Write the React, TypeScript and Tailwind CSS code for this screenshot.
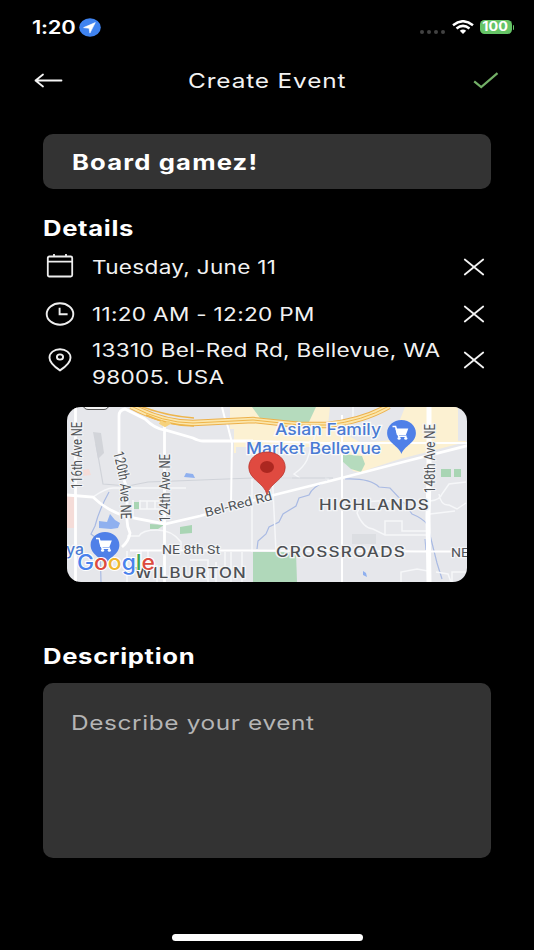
import type { ReactNode } from 'react'
import clsx from 'clsx'

export default function App() {
    return (
        <div className="flex h-[950px] w-[534px] flex-col overflow-hidden bg-black font-['Inter',sans-serif] text-[#f2f2f2]">
            <StatusBar />
            <Header />
            <main className="flex flex-col px-[43px] pt-[27px]">
                <div className="flex h-[55px] items-center rounded-[10px] bg-[#333333] pt-[2px] pl-[29px]">
                    <WideText className="text-[21px] font-bold tracking-[0.95px] text-white">
                        Board gamez!
                    </WideText>
                </div>

                <SectionTitle className="mt-[26px]">Details</SectionTitle>
                <div className="mt-[3px] flex flex-col">
                    <DetailRow className="h-[46px]" icon={<CalendarIcon />}>
                        <WideText className="pt-[2px] text-[18.5px] tracking-[0.25px]">
                            Tuesday, June 11
                        </WideText>
                    </DetailRow>
                    <DetailRow className="h-[47px]" icon={<ClockIcon />}>
                        <WideText className="pt-[2px] text-[18.5px] tracking-[0.25px]">
                            11:20 AM - 12:20 PM
                        </WideText>
                    </DetailRow>
                    <DetailRow className="h-[46px]" icon={<PinIcon />}>
                        <WideText className="pt-[8px] text-[18.5px] leading-[27px] tracking-[0.25px]">
                            13310 Bel-Red Rd, Bellevue, WA
                            <br />
                            98005. USA
                        </WideText>
                    </DetailRow>
                </div>

                <div className="mt-6 ml-[24px] h-[175px] w-[399.5px] overflow-hidden rounded-[14px]">
                    <EventMap />
                </div>

                <SectionTitle className="mt-[61px]">Description</SectionTitle>
                <div className="mt-[14px] h-[175px] rounded-[10px] bg-[#333333] pt-[27px] pl-[28px]">
                    <WideText className="text-[20px] leading-[27px] tracking-[0.5px] text-[#b5b5b5]">
                        Describe your event
                    </WideText>
                </div>
            </main>
            <div className="mx-auto mt-auto mb-[9px] h-[7px] w-[191px] rounded-full bg-white" />
        </div>
    )
}

function WideText({
    children,
    className,
}: {
    children: ReactNode
    className?: string
}) {
    return (
        <div
            className={clsx(
                'w-max origin-left scale-x-[1.22] whitespace-nowrap',
                className
            )}
        >
            {children}
        </div>
    )
}

function SectionTitle({
    children,
    className,
}: {
    children: ReactNode
    className?: string
}) {
    return (
        <h2 className={clsx('flex h-[26px] items-center pt-[2px]', className)}>
            <WideText className="text-[21px] font-bold tracking-[0.55px] text-white">
                {children}
            </WideText>
        </h2>
    )
}

function DetailRow({
    icon,
    children,
    className,
}: {
    icon: ReactNode
    children: ReactNode
    className?: string
}) {
    return (
        <div className={clsx('flex items-center', className)}>
            <div className="flex w-[34px] justify-center">{icon}</div>
            <div className="ml-[14.5px] flex-1">{children}</div>
            <CloseIcon />
        </div>
    )
}

function StatusBar() {
    return (
        <div className="flex h-[54px] shrink-0 items-center pr-[20px] pl-[32px]">
            <div className="w-[47px] shrink-0">
                <WideText className="text-[18px] font-semibold tracking-[-0.2px] text-white">
                    1:20
                </WideText>
            </div>
            <svg width="22" height="19" viewBox="0 0 22 19">
                <ellipse cx="11" cy="9.5" rx="10.8" ry="9.2" fill="#3f83f0" />
                <path d="M16.3 4.6 4.6 9.6l5.5.7.8 4.8z" fill="#fff" stroke="#fff" strokeWidth=".6" />
            </svg>
            <div className="mt-[9px] ml-auto flex gap-[2.7px]">
                <i className="size-1 rounded-full bg-[#424242]" />
                <i className="size-1 rounded-full bg-[#424242]" />
                <i className="size-1 rounded-full bg-[#424242]" />
                <i className="size-1 rounded-full bg-[#424242]" />
            </div>
            <svg
                className="ml-[7px]"
                width="22"
                height="15"
                viewBox="0 0 22 15"
                fill="none"
                stroke="#fff"
                strokeWidth="2.5"
            >
                <path d="M1 5.2Q11-2.7 21 5.2" />
                <path d="M4.5 8.4q6.5-5 13 0" />
                <path d="m11 14-3.2-3.2q3.2-2.6 6.4 0z" fill="#fff" stroke="none" />
            </svg>
            <div className="ml-[6px] flex h-[14.5px] w-[32px] items-center justify-center rounded-[4.5px] bg-[#65c466]">
                <span className="scale-x-[1.15] text-[12.5px] leading-none font-bold text-white">
                    100
                </span>
            </div>
            <div className="ml-px h-[5px] w-[1.5px] rounded-r-full bg-[#65c466]" />
        </div>
    )
}

function Header() {
    return (
        <div className="flex h-[53px] shrink-0 items-center pr-[35.5px] pl-[34px]">
            <svg
                width="29"
                height="15"
                viewBox="0 0 29 15"
                fill="none"
                stroke="#f5f5f5"
                strokeWidth="1.8"
                strokeLinecap="round"
                strokeLinejoin="round"
            >
                <path d="M9 1.5 1.5 7.5 9 13.5M1.5 7.5h26" />
            </svg>
            <div className="ml-[125px]">
                <WideText className="text-[20px] tracking-[0.7px]">
                    Create Event
                </WideText>
            </div>
            <svg
                className="ml-auto"
                width="26"
                height="17"
                viewBox="0 0 26 17"
                fill="none"
                stroke="#73b067"
                strokeWidth="2.2"
            >
                <path d="m1.2 9.3 7 5.7L24.5 1.2" />
            </svg>
        </div>
    )
}

function CalendarIcon() {
    return (
        <svg
            className="mb-[3px]"
            width="28"
            height="25"
            viewBox="0 0 28 25"
            fill="none"
            stroke="#eeeeee"
            strokeWidth="1.8"
        >
            <rect x="1.8" y="3.5" width="24.4" height="20" rx="1.5" />
            <path d="M1.8 8.6h24.4M8 1v3M20 1v3" />
        </svg>
    )
}

function ClockIcon() {
    return (
        <svg
            width="30"
            height="24"
            viewBox="0 0 30 24"
            fill="none"
            stroke="#eeeeee"
            strokeWidth="1.9"
        >
            <ellipse cx="15" cy="12" rx="13.3" ry="10.7" />
            <path d="M14.6 5.7v6.5h8" />
        </svg>
    )
}

function PinIcon() {
    return (
        <svg
            width="24"
            height="24"
            viewBox="0 0 24 24"
            fill="none"
            stroke="#eeeeee"
            strokeWidth="1.9"
        >
            <path d="M12 22.4C6 18.4 1.5 14.6 1.5 9.7c0-5 4.6-8.4 10.5-8.4s10.5 3.4 10.5 8.4c0 4.9-4.5 8.7-10.5 12.7z" />
            <ellipse cx="12" cy="9" rx="3.1" ry="2.6" />
        </svg>
    )
}

function CloseIcon() {
    return (
        <svg
            className="mr-[6px]"
            width="22"
            height="18"
            viewBox="0 0 22 18"
            fill="none"
            stroke="#f2f2f2"
            strokeWidth="1.8"
            strokeLinecap="round"
        >
            <path d="m1.8 1.5 18.4 15M20.2 1.5 1.8 16.5" />
        </svg>
    )
}

function StorePin({ x, y }: { x: number; y: number }) {
    return (
        <g transform={`translate(${x} ${y})`}>
            <path
                d="M0 21C-2.5 13-14.4 10-14.4 0c0-7.2 6.4-13 14.4-13S14.4-7.2 14.4 0C14.4 10 2.5 13 0 21z"
                fill="#4f80e8"
            />
            <path d="M-6.2-4.5h13l-2.4 6.6h-9z" fill="#fff" />
            <path
                d="M-9-6.4h3.1l3 9.6h8"
                fill="none"
                stroke="#fff"
                strokeWidth="1.5"
            />
            <ellipse cx="-2.4" cy="5.4" rx="1.6" ry="1.3" fill="#fff" />
            <ellipse cx="4.3" cy="5.4" rx="1.6" ry="1.3" fill="#fff" />
        </g>
    )
}

function EventMap() {
    return (
        <svg
            width="400"
            height="175"
            viewBox="67 407 400 175"
            className="block"
            fontFamily="Inter, sans-serif"
        >
            <rect x="67" y="407" width="400" height="175" fill="#e6e7eb" />

            {/* land use */}
            <path d="M230 407h100l-2 18 60 32-25 16-10-2-12-16-24-8h-81v6h-2v-24h-4z" fill="#fcf1d2" />
            <path d="M405 407h53v34h8v1l-66 17-37 12-2-28 31-3z" fill="#fcf1d2" />
            <path d="M252 407h64l-8 17-48-6z" fill="#b5dbbd" />
            <path d="M342 454l20 2 3 8-4 8-10-3-9-8z" fill="#b5dbbd" />
            <path d="M253 552h43l1 30h-44z" fill="#b0d8ba" />
            <path d="M441 469h10v8h-10zM454 469h7v8h-7z" fill="#a9d5b4" />
            <path d="M134 502h5v7h-5zM180 527l12-2v8l-12 1zM150 524l14 1-6 4h-8z" fill="#a9d5b4" />
            <path d="M93 432l8 1 3 20-6 6z" fill="#d2d4d9" />
            <path d="M352 534h24v10h-24z" fill="#dcdee2" />
            <path d="M67 496h8v32h-8zM83 470l6-1 2 6-8 1z" fill="#f5dcd8" />
            <path d="M99 521l8 1 3-8 5 6 5 3-2 5-7 1-12-1z" fill="#8fb0ef" />
            <path d="M186 473l7 1 2 4-11-1zM363 571l3 2 1 4-4-2z" fill="#8fb0ef" />

            {/* streams */}
            <g fill="none" stroke="#a9bae3" strokeWidth="1.2">
                <path d="M327 481q-15 6-18 14l-10 3-3 8-13 8-4 8-10 5-3 7-8 7-1 8" />
                <path d="M345 479q25-1 34 8l11 1 16 17 6 9q10 4 15 10l4 15 6 24 5 16" />
                <path d="M425 539l1 11M109 492q-10 18-14 34l-4 8 9 7 1 41" />
            </g>

            {/* side streets */}
            <g fill="none" stroke="#f6f7f9" strokeWidth="1.5">
                <path d="M93 497q13-9 20-9h73M133 500v17M140 501h24v8h-24v-9M147 501v8M155 501v8" />
                <path d="M127 536h12q3-6 18-6t24 12v8M127 551v31M141 551v14M148 551v14M157 565v17" />
                <path d="M252 478v74M272 470q2 40 4 82M252 478h40M300 478l-6-4q9-6 13-14l9-27 9-8" />
                <path d="M325 478l4 1M353 407v15M225 552v14M231 552v30M242 552v30M190 560h18v22M216 562v20" />
                <path d="M357 513q4-12 20-12h37M357 513q6 15 16 16l12 6h41M385 535v-14h17v10h25" />
                <path d="M430 501q10-1 12-7l7-10 17-2M439 494q2 12 10 11l8 4 9-6M430 514l25-3M401 582v-10l16-3 11 2M436 572l12 2 3 8M452 582v-10h14" />
            </g>
            <g fill="none" stroke="#d0d3d9" strokeWidth="1.2">
                <path d="M96 444l7 40 25 2 20-4 105-4h80" />
            </g>

            {/* main roads */}
            <g fill="none" stroke="#fff" strokeWidth="2.8">
                <path d="M75.5 407v175M119 452v-36q0-6 6-7l20 10q10 10 20 11l28 8q6 3 10 3h50M164.5 424v158" />
                <path d="M119 452q2 20 8 37v31q0 7 3 13-1 8-8 14" />
                <path d="M67 495l26 2q14 14 35 20l37 7 35-8 58-17 72-18 77-20 63-16" />
                <path d="M130 550.5h120l176 1h41" strokeWidth="2" />
                <path d="M222 407q2 10 6 20l4 16-1 62M342 415v167" strokeWidth="2" />
                <path d="M250 441l75 2h142" strokeWidth="2" />
                <path d="M429 407v70l-1 40 1 65" strokeWidth="5" />
            </g>

            {/* highway */}
            <g fill="none">
                <path d="M131 406q32 17 62 17l60-3 47 5h27q36-4 62-19" stroke="#edb04a" strokeWidth="6.4" />
                <path d="M131 406q32 17 62 17l60-3 47 5h27q36-4 62-19" stroke="#fbe6ac" strokeWidth="4.4" />
                <path d="M131 406q32 17 62 17l60-3 47 5h27q36-4 62-19" stroke="#eeb54b" strokeWidth="1" />
                <path d="M140 406q26 10 54 12M146 415q24 11 48 11" stroke="#eeb54b" strokeWidth="1.6" />
                <path d="M160 422l5 3 5-3" stroke="#f6d27d" strokeWidth="4" />
            </g>
            <rect x="83" y="396" width="26" height="13.5" rx="5" fill="#f4f4f4" stroke="#555" />

            {/* street labels */}
            <g
                fill="#505357"
                stroke="#f3f4f6"
                strokeWidth="2.5"
                paintOrder="stroke"
                strokeLinejoin="round"
                fontFamily="Roboto, sans-serif"
            >
                <text transform="translate(81.5 489) rotate(-90)" fontSize="15" textLength="67" lengthAdjust="spacingAndGlyphs">116th Ave NE</text>
                <text transform="translate(170 522) rotate(-90)" fontSize="15" textLength="68" lengthAdjust="spacingAndGlyphs">124th Ave NE</text>
                <text transform="translate(435 493) rotate(-90)" fontSize="15" textLength="69" lengthAdjust="spacingAndGlyphs">148th Ave NE</text>
                <path id="ave120" d="M113 453q4 14 7 31l1 35" fill="none" stroke="none" />
                <text fontSize="15" textLength="67" lengthAdjust="spacingAndGlyphs">
                    <textPath href="#ave120" textLength="67" lengthAdjust="spacingAndGlyphs">120th Ave NE</textPath>
                </text>
                <text transform="translate(206 517) rotate(-14.5)" fontSize="12.5" textLength="69" lengthAdjust="spacingAndGlyphs">Bel-Red Rd</text>
                <text x="162" y="554" fontSize="12.5" textLength="58" lengthAdjust="spacingAndGlyphs">NE 8th St</text>
                <text x="451" y="557" fontSize="12.5" textLength="18" lengthAdjust="spacingAndGlyphs">NE</text>
            </g>

            {/* neighbourhoods */}
            <g
                fill="#4d5054"
                stroke="#f3f4f6"
                strokeWidth="2.5"
                paintOrder="stroke"
                fontSize="14"
                fontWeight="500"
                letterSpacing="1"
            >
                <text x="319" y="510" textLength="111" lengthAdjust="spacingAndGlyphs">HIGHLANDS</text>
                <text x="276" y="556.5" textLength="130" lengthAdjust="spacingAndGlyphs">CROSSROADS</text>
                <text x="135" y="577.5" textLength="112" lengthAdjust="spacingAndGlyphs">WILBURTON</text>
            </g>

            {/* stores */}
            <g
                fill="#4a7bd3"
                stroke="#fafafa"
                strokeWidth="2.5"
                paintOrder="stroke"
                fontSize="16"
                fontWeight="500"
            >
                <text x="275" y="434.5" textLength="106" lengthAdjust="spacingAndGlyphs">Asian Family</text>
                <text x="246" y="453.5" textLength="135" lengthAdjust="spacingAndGlyphs">Market Bellevue</text>
                <text x="66" y="555" textLength="18" lengthAdjust="spacingAndGlyphs">ya</text>
            </g>
            <StorePin x={401.5} y={433} />
            <StorePin x={105} y={545} />

            <text
                x="77"
                y="569.5"
                fontSize="21"
                fontWeight="500"
                stroke="#fff"
                strokeWidth="2"
                paintOrder="stroke"
                textLength="78"
                lengthAdjust="spacingAndGlyphs"
            >
                <tspan fill="#4a82ec">G</tspan>
                <tspan fill="#dc4b3e">o</tspan>
                <tspan fill="#f0b72f">o</tspan>
                <tspan fill="#4a82ec">g</tspan>
                <tspan fill="#3fa757">l</tspan>
                <tspan fill="#dc4b3e">e</tspan>
            </text>

            {/* event marker */}
            <path
                d="M267 494.5c-3-12-18.2-15-18.2-27.2 0-8.6 8-15.3 18.2-15.3s18.2 6.7 18.2 15.3c0 12.2-15.2 15.2-18.2 27.2z"
                fill="#e04a40"
                stroke="#b9362e"
                strokeWidth=".8"
            />
            <ellipse cx="267" cy="467" rx="7" ry="6" fill="#ac2720" />
        </svg>
    )
}
